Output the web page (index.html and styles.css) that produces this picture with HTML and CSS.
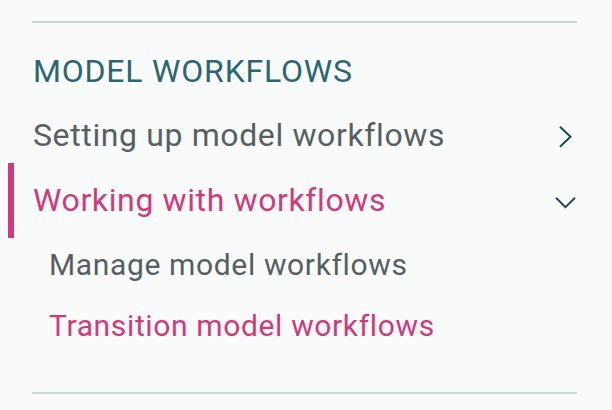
FILE: index.html
```html
<!DOCTYPE html>
<html lang="en">
<head>
<meta charset="utf-8">
<title>Model workflows</title>
<link rel="stylesheet" href="styles.css">
</head>
<body>
<div class="page">
  <nav class="nav">
    <div class="divider divider-top"></div>
    <div class="heading">MODEL WORKFLOWS</div>
    <div class="item item-setting">
      <span class="label">Setting up model workflows</span>
      <svg class="chev" width="24" height="40" viewBox="0 0 24 40"><path d="M6 11.7 L16.5 21.7 L6 31.7" fill="none" stroke="#1f4852" stroke-width="2"/></svg>
    </div>
    <div class="item item-active">
      <span class="label">Working with workflows</span>
      <svg class="chev" width="24" height="40" viewBox="0 0 24 40"><path d="M2 17.7 L11.5 27.2 L21 17.7" fill="none" stroke="#1f4852" stroke-width="2"/></svg>
    </div>
    <div class="sub sub-manage"><span class="label">Manage model workflows</span></div>
    <div class="sub sub-current"><span class="label">Transition model workflows</span></div>
    <div class="divider divider-bottom"></div>
  </nav>
</div>
</body>
</html>
```

FILE: styles.css
```css
html, body {
  margin: 0;
  padding: 0;
  background: #f9fbfb;
}
.page {
  width: 610px;
  height: 410px;
  border-right: 2px solid #eef2f2;
  overflow: hidden;
  font-family: Roboto, "Liberation Sans", sans-serif;
}
.nav {
  margin-left: 8px;
  width: 570px;
  display: flex;
  flex-direction: column;
}
.divider {
  margin-left: 24px;
  width: 545px;
  height: 2px;
  background: #c8d5d7;
}
.divider-top {
  margin-top: 21px;
}
.heading {
  margin-top: 28px;
  padding-left: 25px;
  font-size: 32px;
  line-height: 40px;
  letter-spacing: 0.8px;
  color: #2d6670;
}
.item {
  display: flex;
  align-items: center;
  justify-content: space-between;
  border-left: 6px solid transparent;
  padding-left: 19px;
  font-size: 32px;
  line-height: 40px;
  letter-spacing: 0.62px;
  color: #575f63;
}
.item-setting {
  margin-top: 24px;
}
.item-active {
  margin-top: 8px;
  padding-top: 17px;
  padding-bottom: 18px;
  border-left-color: #cf3a7a;
  color: #d03a7a;
}
.chev {
  flex: none;
  display: block;
}
.sub {
  padding-left: 41px;
  font-size: 30px;
  line-height: 40px;
  letter-spacing: 0.64px;
  color: #575f63;
}
.sub-manage {
  margin-top: 7px;
}
.sub-current {
  margin-top: 21px;
  color: #d03a7a;
}
.divider-bottom {
  margin-top: 46px;
}
```
